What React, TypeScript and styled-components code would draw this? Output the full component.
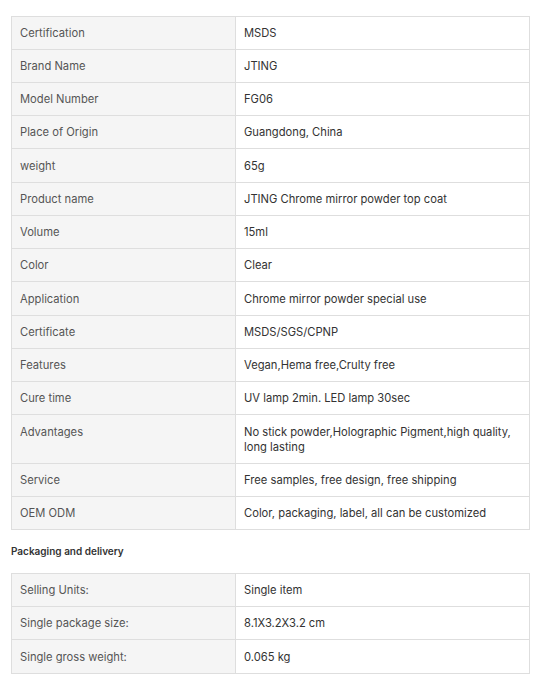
import React from "react";
import styled, { createGlobalStyle } from "styled-components";

const Global = createGlobalStyle`
  html, body { margin: 0; padding: 0; background: #fff; }
  body { font-family: Inter, "Noto Sans", Arial, sans-serif; }
`;

const Page = styled.div`
  padding: 15.5px 23px 0 11px;
  display: flex;
  flex-direction: column;
`;

const Table = styled.table`
  width: 100%;
  border-collapse: collapse;
  table-layout: fixed;
  font-size: 11.2px;
  line-height: 15px;
`;

const Label = styled.td`
  width: 224px;
  box-sizing: border-box;
  background: #f5f5f5;
  color: #555;
  border: 1px solid #dedede;
  padding: 9.2px 8px 8.05px;
  vertical-align: top;
`;

const Value = styled.td`
  background: #fff;
  color: #333;
  border: 1px solid #dedede;
  padding: 9.2px 8px 8.05px;
  vertical-align: top;
`;

const Heading = styled.div`
  font-size: 10px;
  font-weight: 600;
  color: #333;
  line-height: 15px;
  margin: 14px 0 14px 0;
`;

const specs: [string, string][] = [
  ["Certification", "MSDS"],
  ["Brand Name", "JTING"],
  ["Model Number", "FG06"],
  ["Place of Origin", "Guangdong, China"],
  ["weight", "65g"],
  ["Product name", "JTING Chrome mirror powder top coat"],
  ["Volume", "15ml"],
  ["Color", "Clear"],
  ["Application", "Chrome mirror powder special use"],
  ["Certificate", "MSDS/SGS/CPNP"],
  ["Features", "Vegan,Hema free,Crulty free"],
  ["Cure time", "UV lamp 2min. LED lamp 30sec"],
  ["Advantages", "No stick powder,Holographic Pigment,high quality, long lasting"],
  ["Service", "Free samples, free design, free shipping"],
  ["OEM ODM", "Color, packaging, label, all can be customized"],
];

const packaging: [string, string][] = [
  ["Selling Units:", "Single item"],
  ["Single package size:", "8.1X3.2X3.2 cm"],
  ["Single gross weight:", "0.065 kg"],
];

function SpecTable({ rows }: { rows: [string, string][] }) {
  return (
    <Table>
      <tbody>
        {rows.map(([k, v]) => (
          <tr key={k}>
            <Label>{k}</Label>
            <Value>{v}</Value>
          </tr>
        ))}
      </tbody>
    </Table>
  );
}

export default function App() {
  return (
    <>
      <Global />
      <Page>
        <SpecTable rows={specs} />
        <Heading>Packaging and delivery</Heading>
        <SpecTable rows={packaging} />
      </Page>
    </>
  );
}
